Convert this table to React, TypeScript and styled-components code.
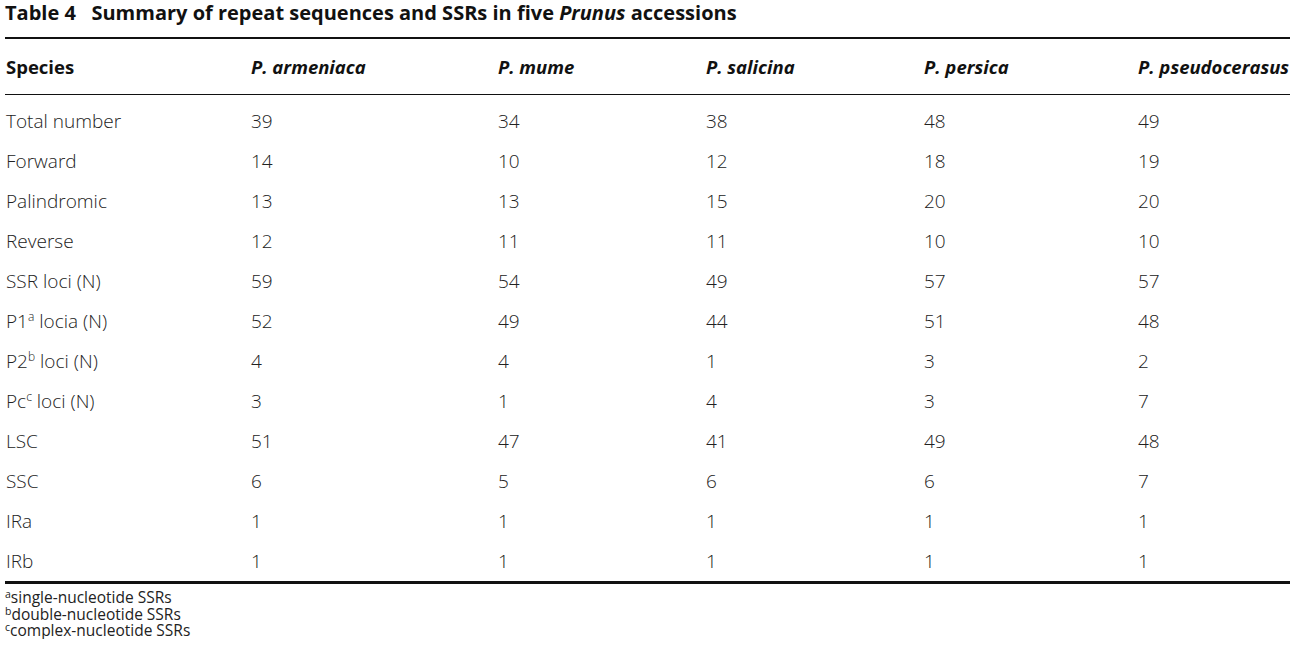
import React from "react";
import styled, { createGlobalStyle } from "styled-components";

const Global = createGlobalStyle`
  html, body { margin: 0; padding: 0; background: #fff; }
  body { font-family: "Open Sans", "Liberation Sans", sans-serif; color: #1a1a1a; }
`;

const Page = styled.div`
  width: 1294px;
  padding: 0 4px 0 5px;
  box-sizing: border-box;
`;

const Title = styled.h1`
  margin: 0;
  height: 37px;
  padding-top: 0;
  box-sizing: border-box;
  font-size: 20px;
  font-weight: 700;
  line-height: 26px;
  color: #111;
  white-space: pre;
  em { font-style: italic; }
`;

const Table = styled.div`
  border-top: 2px solid #111;
  border-bottom: 3px solid #111;
`;

const COLS = "245px 247px 208px 218px 214px 1fr";

const HeadRow = styled.div`
  display: grid;
  grid-template-columns: ${COLS};
  align-items: center;
  height: 55px;
  border-bottom: 1px solid #111;
`;

const HeadCell = styled.div<{ $italic?: boolean }>`
  padding-left: 1px;
  font-size: 18.5px;
  font-weight: 700;
  font-style: ${(p) => (p.$italic ? "italic" : "normal")};
  color: #111;
  white-space: nowrap;
`;

const Body = styled.div`
  padding-top: 6px;
`;

const Row = styled.div`
  display: grid;
  grid-template-columns: ${COLS};
  align-items: center;
  height: 40px;
`;

const Cell = styled.div`
  padding-left: 1px;
  font-size: 19px;
  font-weight: 300;
  color: #222;
  white-space: nowrap;
  sup { font-size: 12px; line-height: 0; vertical-align: 7px; }
`;

const Notes = styled.div`
  padding-top: 5px;
  font-size: 15.5px;
  line-height: 16.5px;
  color: #222;
  sup { font-size: 10.5px; line-height: 0; vertical-align: 5px; }
`;

const NoteLine = styled.div`
  height: 16.5px;
  white-space: nowrap;
`;

const species = [
  "P. armeniaca",
  "P. mume",
  "P. salicina",
  "P. persica",
  "P. pseudocerasus",
];

const rows: { label: React.ReactNode; values: number[] }[] = [
  { label: "Total number", values: [39, 34, 38, 48, 49] },
  { label: "Forward", values: [14, 10, 12, 18, 19] },
  { label: "Palindromic", values: [13, 13, 15, 20, 20] },
  { label: "Reverse", values: [12, 11, 11, 10, 10] },
  { label: "SSR loci (N)", values: [59, 54, 49, 57, 57] },
  { label: <>P1<sup>a</sup> locia (N)</>, values: [52, 49, 44, 51, 48] },
  { label: <>P2<sup>b</sup> loci (N)</>, values: [4, 4, 1, 3, 2] },
  { label: <>Pc<sup>c</sup> loci (N)</>, values: [3, 1, 4, 3, 7] },
  { label: "LSC", values: [51, 47, 41, 49, 48] },
  { label: "SSC", values: [6, 5, 6, 6, 7] },
  { label: "IRa", values: [1, 1, 1, 1, 1] },
  { label: "IRb", values: [1, 1, 1, 1, 1] },
];

export default function App() {
  return (
    <Page>
      <Global />
      <Title>
        {"Table 4   Summary of repeat sequences and SSRs in five "}
        <em>Prunus</em>
        {" accessions"}
      </Title>
      <Table>
        <HeadRow>
          <HeadCell>Species</HeadCell>
          {species.map((s) => (
            <HeadCell key={s} $italic>
              {s}
            </HeadCell>
          ))}
        </HeadRow>
        <Body>
          {rows.map((r, i) => (
            <Row key={i}>
              <Cell>{r.label}</Cell>
              {r.values.map((v, j) => (
                <Cell key={j}>{v}</Cell>
              ))}
            </Row>
          ))}
        </Body>
      </Table>
      <Notes>
        <NoteLine><sup>a</sup>single-nucleotide SSRs</NoteLine>
        <NoteLine><sup>b</sup>double-nucleotide SSRs</NoteLine>
        <NoteLine><sup>c</sup>complex-nucleotide SSRs</NoteLine>
      </Notes>
    </Page>
  );
}
